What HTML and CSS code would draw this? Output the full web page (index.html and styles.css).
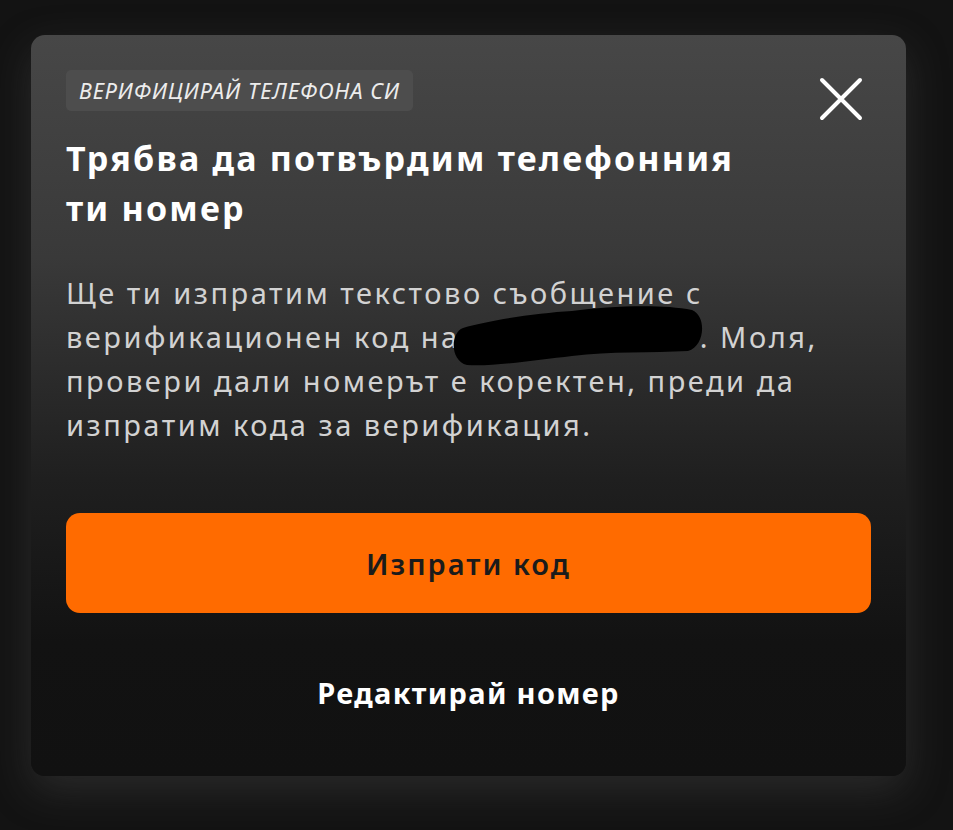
FILE: index.html
```html
<!DOCTYPE html>
<html lang="bg">
<head>
  <meta charset="UTF-8" />
  <title>Верифицирай телефона си</title>
  <link rel="stylesheet" href="styles.css">
</head>
<body>

  <div class="modal">
    <div class="modal-head">
      <span class="badge">ВЕРИФИЦИРАЙ ТЕЛЕФОНА СИ</span>
      <button type="button" class="close" aria-label="Затвори">
        <svg width="44" height="44" viewBox="0 0 44 44">
          <path d="M3 3 L41 41 M41 3 L3 41" stroke="#fff" stroke-width="4" stroke-linecap="round" fill="none" />
        </svg>
      </button>
    </div>

    <h2 class="title">Трябва да потвърдим телефонния ти номер</h2>

    <p class="text">
      Ще ти изпратим текстово съобщение с верификационен код на <span class="redact"><svg width="260" height="64" viewBox="0 0 260 64"><path d="M13 24 C41 16 87 9 122 7 C160 2 212 0 242 6 C257 12 255 42 238 47 C202 49 160 47 122 52 C87 56 41 63 17 61 C0 57 0 29 13 24 Z" fill="#000" /></svg></span>. Моля, провери дали номерът е коректен, преди да изпратим кода за верификация.
    </p>

    <button type="button" class="send">Изпрати код</button>
    <button type="button" class="edit">Редактирай номер</button>
  </div>

</body>
</html>
```
FILE: styles.css
```css
body {
  margin: 0;
  padding: 35px 47px 0 31px;
  height: 830px;
  box-sizing: border-box;
  background: #131313;
  font-family: "Noto Sans", "Open Sans", sans-serif;
  color: #fff;
}
.modal {
  height: 741px;
  box-sizing: border-box;
  padding: 35px;
  border-radius: 14px;
  background: linear-gradient(#474747 0%, #393939 30%, #1f1f1f 60%, #121212 82%, #111 100%);
  box-shadow: 0 14px 40px rgba(70, 70, 70, 0.45);
  display: flex;
  flex-direction: column;
}
.modal-head {
  display: flex;
  justify-content: space-between;
  align-items: flex-start;
}
.badge {
  display: inline-block;
  height: 41px;
  line-height: 41px;
  padding: 0 13px;
  border-radius: 5px;
  background: #4d4d4d;
  color: #ececec;
  font-size: 22px;
  font-style: italic;
  letter-spacing: 0.9px;
}
.close {
  background: none;
  border: 0;
  padding: 0;
  margin: 7px 8px 0 0;
  width: 44px;
  height: 44px;
  cursor: pointer;
}
.close svg {
  display: block;
}
.title {
  margin: 12px 0 0;
  width: 690px;
  font-size: 34px;
  line-height: 50px;
  font-weight: 700;
  letter-spacing: 2.2px;
}
.text {
  margin: 38px 0 0;
  font-size: 29px;
  line-height: 44px;
  color: #d2d2d2;
  letter-spacing: 2.5px;
}
.redact {
  position: relative;
  display: inline-block;
  width: 230px;
  height: 1em;
}
.redact svg {
  position: absolute;
  left: -20px;
  top: -15px;
}
.send {
  margin-top: 66px;
  height: 100px;
  border: 0;
  border-radius: 14px;
  background: #ff6b00;
  color: #1b1b1b;
  font-family: inherit;
  font-size: 29px;
  font-weight: 600;
  letter-spacing: 2px;
}
.edit {
  flex: 1;
  border: 0;
  background: none;
  color: #fff;
  font-family: inherit;
  font-size: 29px;
  font-weight: 700;
  letter-spacing: 1.3px;
  padding: 30px 0 0;
}
```
